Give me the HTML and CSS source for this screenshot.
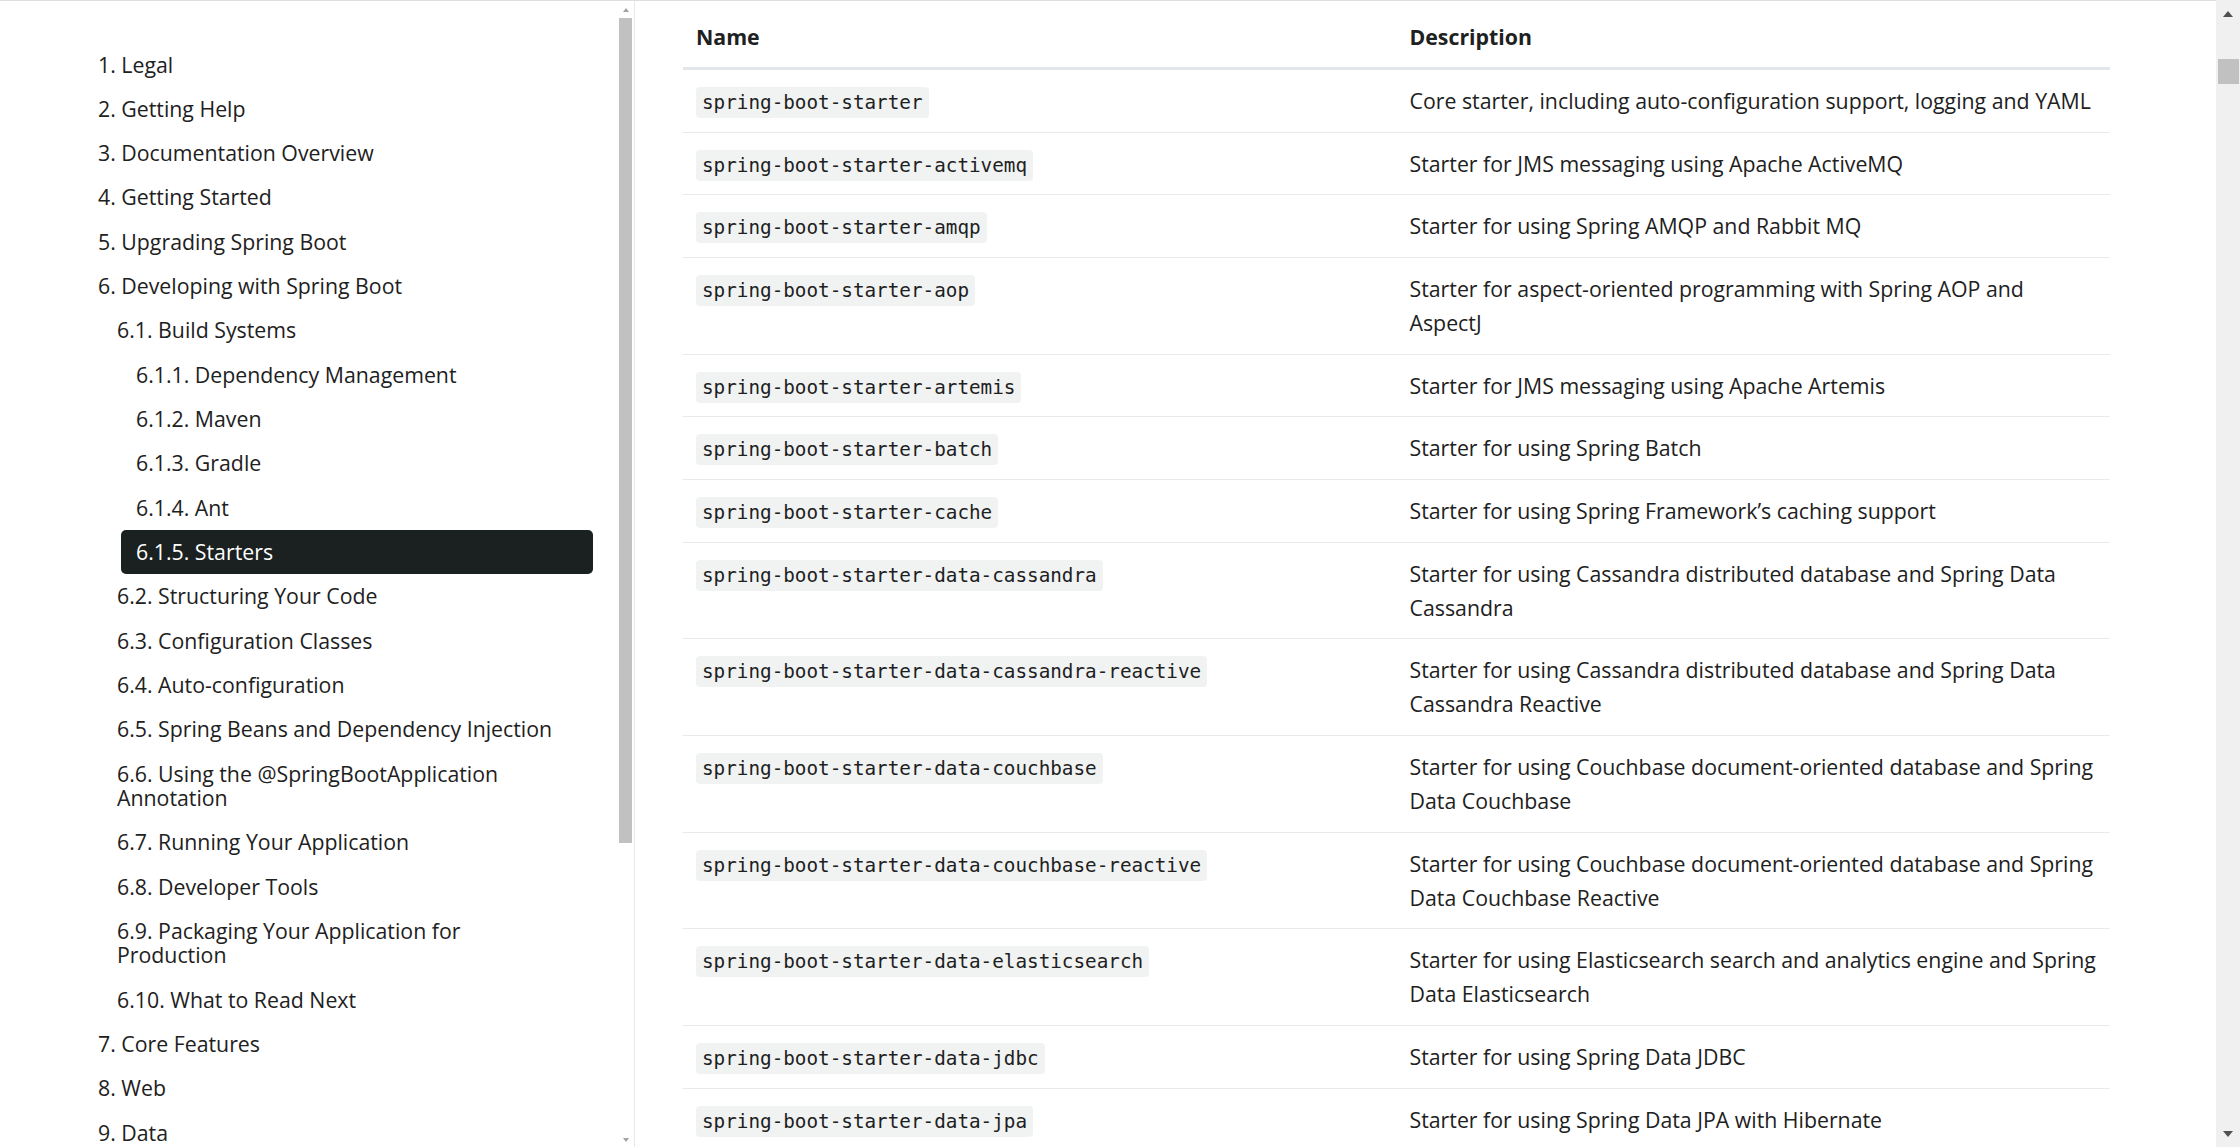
FILE: index.html
```html
<!DOCTYPE html>
<html lang="en">
<head>
<meta charset="utf-8">
<title>Spring Boot Reference - Starters</title>
<link rel="stylesheet" href="styles.css">
</head>
<body>
<div class="window">
  <div class="frame">
    <aside class="sidebar">
      <nav class="toc">
        <ul class="toc-list">
          <li class="lvl1"><a>1. Legal</a></li>
          <li class="lvl1"><a>2. Getting Help</a></li>
          <li class="lvl1"><a>3. Documentation Overview</a></li>
          <li class="lvl1"><a>4. Getting Started</a></li>
          <li class="lvl1"><a>5. Upgrading Spring Boot</a></li>
          <li class="lvl1"><a>6. Developing with Spring Boot</a></li>
          <li class="lvl2"><a>6.1. Build Systems</a></li>
          <li class="lvl3"><a>6.1.1. Dependency Management</a></li>
          <li class="lvl3"><a>6.1.2. Maven</a></li>
          <li class="lvl3"><a>6.1.3. Gradle</a></li>
          <li class="lvl3"><a>6.1.4. Ant</a></li>
          <li class="lvl3 active"><a>6.1.5. Starters</a></li>
          <li class="lvl2"><a>6.2. Structuring Your Code</a></li>
          <li class="lvl2"><a>6.3. Configuration Classes</a></li>
          <li class="lvl2"><a>6.4. Auto-configuration</a></li>
          <li class="lvl2"><a>6.5. Spring Beans and Dependency Injection</a></li>
          <li class="lvl2"><a>6.6. Using the @SpringBootApplication<br>Annotation</a></li>
          <li class="lvl2"><a>6.7. Running Your Application</a></li>
          <li class="lvl2"><a>6.8. Developer Tools</a></li>
          <li class="lvl2"><a>6.9. Packaging Your Application for<br>Production</a></li>
          <li class="lvl2"><a>6.10. What to Read Next</a></li>
          <li class="lvl1"><a>7. Core Features</a></li>
          <li class="lvl1"><a>8. Web</a></li>
          <li class="lvl1"><a>9. Data</a></li>
          <li class="lvl1"><a>10. Messaging</a></li>
        </ul>
      </nav>
      <div class="side-scroll">
        <span class="arrow-up small"></span>
        <span class="side-thumb"></span>
        <span class="fill"></span>
        <span class="arrow-down small"></span>
      </div>
    </aside>
    <main class="content">
      <table class="starters">
        <colgroup><col class="col-name"><col class="col-desc"></colgroup>
        <thead>
          <tr><th>Name</th><th>Description</th></tr>
        </thead>
        <tbody>
          <tr><td><code>spring-boot-starter</code></td><td>Core starter, including auto-configuration support, logging and YAML</td></tr>
          <tr><td><code>spring-boot-starter-activemq</code></td><td>Starter for JMS messaging using Apache ActiveMQ</td></tr>
          <tr><td><code>spring-boot-starter-amqp</code></td><td>Starter for using Spring AMQP and Rabbit MQ</td></tr>
          <tr><td><code>spring-boot-starter-aop</code></td><td>Starter for aspect-oriented programming with Spring AOP and<br>AspectJ</td></tr>
          <tr><td><code>spring-boot-starter-artemis</code></td><td>Starter for JMS messaging using Apache Artemis</td></tr>
          <tr><td><code>spring-boot-starter-batch</code></td><td>Starter for using Spring Batch</td></tr>
          <tr><td><code>spring-boot-starter-cache</code></td><td>Starter for using Spring Framework’s caching support</td></tr>
          <tr><td><code>spring-boot-starter-data-cassandra</code></td><td>Starter for using Cassandra distributed database and Spring Data<br>Cassandra</td></tr>
          <tr><td><code>spring-boot-starter-data-cassandra-reactive</code></td><td>Starter for using Cassandra distributed database and Spring Data<br>Cassandra Reactive</td></tr>
          <tr><td><code>spring-boot-starter-data-couchbase</code></td><td>Starter for using Couchbase document-oriented database and Spring<br>Data Couchbase</td></tr>
          <tr><td><code>spring-boot-starter-data-couchbase-reactive</code></td><td>Starter for using Couchbase document-oriented database and Spring<br>Data Couchbase Reactive</td></tr>
          <tr><td><code>spring-boot-starter-data-elasticsearch</code></td><td>Starter for using Elasticsearch search and analytics engine and Spring<br>Data Elasticsearch</td></tr>
          <tr><td><code>spring-boot-starter-data-jdbc</code></td><td>Starter for using Spring Data JDBC</td></tr>
          <tr><td><code>spring-boot-starter-data-jpa</code></td><td>Starter for using Spring Data JPA with Hibernate</td></tr>
          <tr><td><code>spring-boot-starter-data-ldap</code></td><td>Starter for using Spring Data LDAP</td></tr>
        </tbody>
      </table>
    </main>
  </div>
  <div class="page-scroll">
    <span class="arrow-up big"></span>
    <span class="page-thumb"></span>
    <span class="fill"></span>
    <span class="arrow-down big"></span>
  </div>
</div>
</body>
</html>
```
FILE: styles.css
```css
html, body {
  margin: 0;
  padding: 0;
  height: 100%;
  overflow: hidden;
  background: #ffffff;
}

body {
  font-family: "Open Sans", "Noto Sans", sans-serif;
  font-size: 21.3px;
  color: #1d2121;
}

.window {
  display: flex;
  height: 1147px;
}

.frame {
  flex: 1;
  display: flex;
  border-top: 1px solid #dedede;
  min-width: 0;
}

/* ---------- sidebar ---------- */
.sidebar {
  width: 634px;
  flex: none;
  display: flex;
  border-right: 1px solid #e3eaea;
  overflow: hidden;
}

.toc {
  flex: 1;
  overflow: hidden;
  padding: 41.5px 26px 0 83px;
}

.toc-list {
  list-style: none;
  margin: 0;
  padding: 0;
}

.toc-list li a {
  display: block;
  padding: 10px 15px;
  line-height: 24.33px;
  white-space: nowrap;
  color: #1d2121;
  border-radius: 5px;
}

.toc-list .lvl2 { margin-left: 19px; }
.toc-list .lvl3 { margin-left: 38px; }

.toc-list .active a {
  background: #1b2020;
  color: #ffffff;
}

.side-scroll {
  width: 13px;
  flex: none;
  padding-right: 2px;
  display: flex;
  flex-direction: column;
  align-items: center;
}

.side-thumb {
  width: 13px;
  height: 825px;
  background: #c1c1c1;
  flex: none;
}

.fill { flex: 1; }

.arrow-up, .arrow-down {
  width: 0;
  height: 0;
  flex: none;
}

.arrow-up.small {
  margin: 7px 0 6px;
  border-left: 3.5px solid transparent;
  border-right: 3.5px solid transparent;
  border-bottom: 4px solid #a3a3a3;
}

.arrow-down.small {
  margin: 0 0 5px;
  border-left: 3.5px solid transparent;
  border-right: 3.5px solid transparent;
  border-top: 4px solid #a3a3a3;
}

/* ---------- main content ---------- */
.content {
  flex: 1;
  min-width: 0;
  overflow: hidden;
  padding: 5px 106px 0 48px;
}

.starters {
  width: 100%;
  border-collapse: collapse;
  table-layout: fixed;
}

.col-name, .col-desc { width: 50%; }

.starters th {
  text-align: left;
  font-weight: 700;
  padding: 14px 13px 13px;
  line-height: 34.2px;
  border-bottom: 3px solid #e3e7ea;
}

.starters td {
  vertical-align: top;
  padding: 13.8px 13px;
  line-height: 34.05px;
  border-bottom: 1px solid #e8ebeb;
}

.starters code {
  font-family: "DejaVu Sans Mono", "Liberation Mono", monospace;
  font-size: 19.3px;
  line-height: 1;
  padding: 4px 6px;
  background: #f1f3f3;
  border-radius: 4px;
  color: #1d2121;
}

/* ---------- page scrollbar ---------- */
.page-scroll {
  width: 24px;
  flex: none;
  background: #f0f0f0;
  display: flex;
  flex-direction: column;
  align-items: center;
}

.arrow-up.big {
  margin: 11px 0 0;
  border-left: 5.5px solid transparent;
  border-right: 5.5px solid transparent;
  border-bottom: 6px solid #505050;
}

.page-thumb {
  margin: 42px 0 0 1px;
  width: 21px;
  height: 25px;
  background: #c1c1c1;
  flex: none;
}

.arrow-down.big {
  margin: 0 0 10px;
  border-left: 5.5px solid transparent;
  border-right: 5.5px solid transparent;
  border-top: 6px solid #505050;
}
```
